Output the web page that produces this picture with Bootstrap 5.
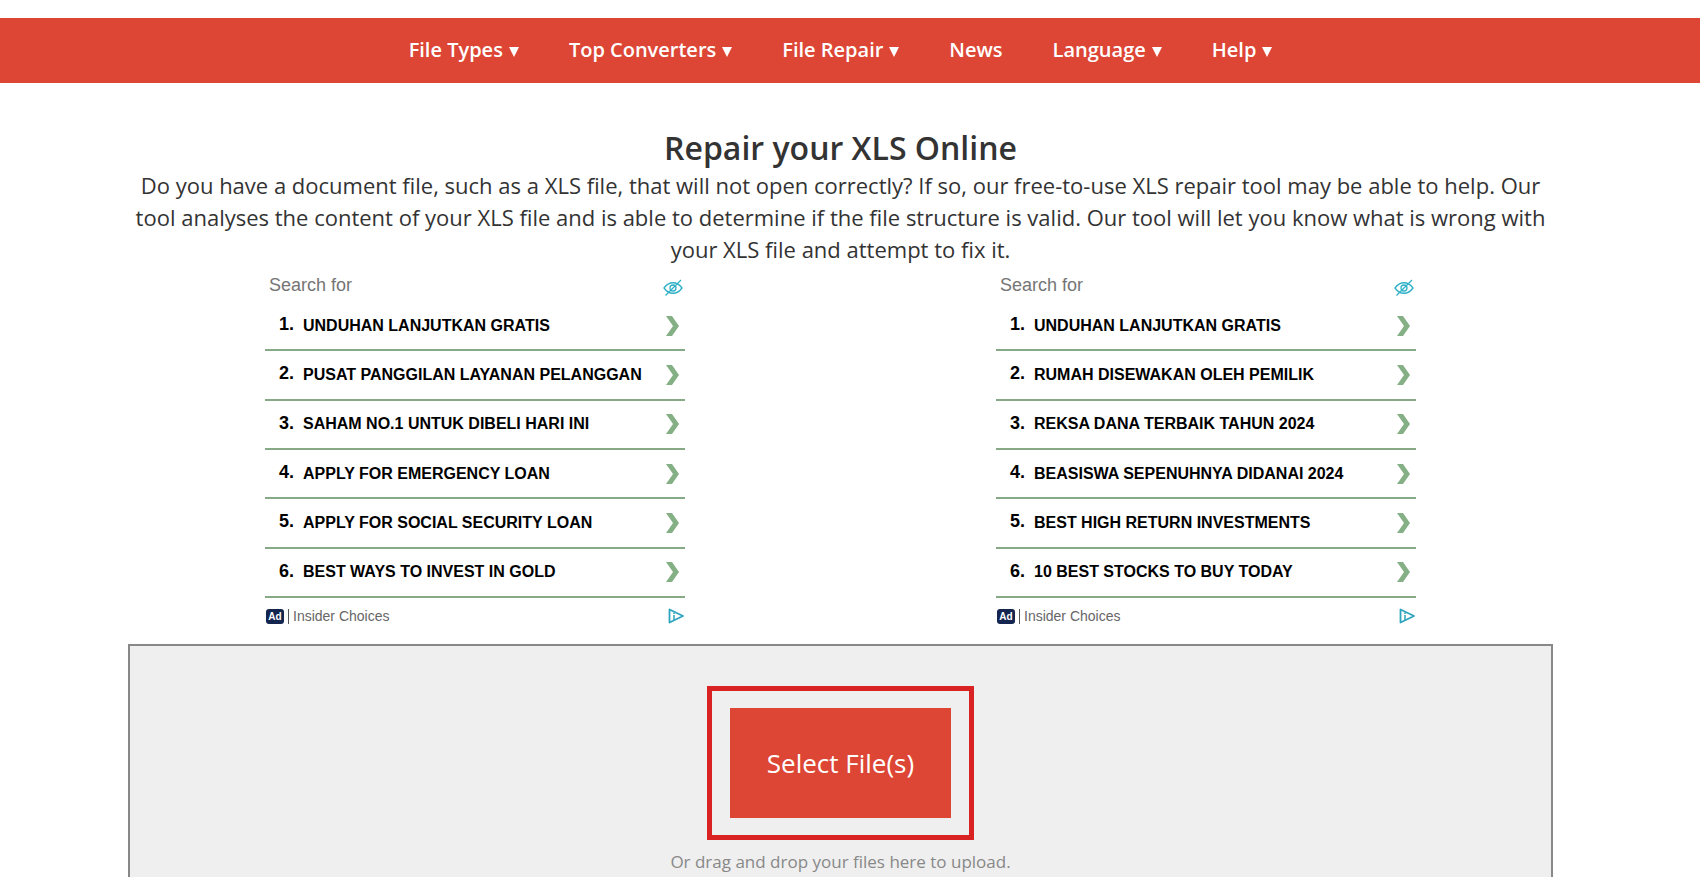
<!DOCTYPE html>
<html lang="en">
<head>
<meta charset="utf-8">
<meta name="viewport" content="width=device-width, initial-scale=1">
<title>Repair your XLS Online</title>
<link href="https://cdn.jsdelivr.net/npm/bootstrap@5.3.0/dist/css/bootstrap.min.css" rel="stylesheet">
<style>
  body { font-family: "Trebuchet MS", "Open Sans", sans-serif; color: #333; background: #fff; }
  .site-nav { background: #dd4535; margin-top: 18px; min-height: 65px; padding-bottom: 2px; }
  .site-nav, .page-main { padding-right: 19px; }
  .site-nav .nav { column-gap: 50px; }
  .site-nav .nav-link { color: #fff; font-size: 20px; line-height: 30px; font-weight: 600; gap: 6px; }
  .caret { width: 10px; height: 10px; fill: #fff; margin-top: 4px; }
  .page-col { max-width: 1425px; }
  h1 { font-size: 32px; line-height: 40px; font-weight: 600; margin-top: 45px; }
  .intro { font-size: 22px; line-height: 32px; padding-top: 1px; }
  .ads { padding: 6px 137px 20px; row-gap: 24px; }
  .ad-unit { width: 420px; font-family: "Liberation Sans", Arial, sans-serif; }
  .ad-head { color: #757575; font-size: 18px; line-height: 28px; padding: 0 2px 3px 4px; }
  .ad-head svg { margin-top: 6px; }
  .ad-list { min-height: 296px; }
  .ad-row { border-bottom: 2px solid #85aa85; color: #000; font-weight: 700; font-size: 16px; padding: 0 6px 0 14px; }
  .ad-num { width: 24px; font-size: 18px; padding-bottom: 2px; }
  .ad-foot { color: #666; font-size: 14px; line-height: 20px; padding: 10px 1px 0; }
  .ad-tag { background: #14254f; color: #fff; font-size: 10px; line-height: 15px; width: 18px; border-radius: 3px; }
  .ad-source { border-left: 1px solid #555; line-height: 15px; }
  .drop-zone { background: #efefef; border: 2px solid #888; border-bottom: 0; padding-top: 40px; min-height: 240px; color: #888; }
  .callout { border: 5px solid #d92323; padding: 17px 18px; }
  .btn-select { background: #dd4535; color: #fff; font-size: 26px; width: 221px; height: 110px; }
  .drop-hint { font-size: 17px; line-height: 24px; margin-top: 10px; }
  @media (max-width: 1300px) { .ads { padding-left: 0; padding-right: 0; } }
</style>
</head>
<body>
<svg class="d-none" aria-hidden="true">
  <symbol id="tri" viewBox="0 0 10 10"><path d="M0 0h10L5 10z"/></symbol>
  <symbol id="chev" viewBox="0 0 13 20"><path d="M0 0h6l7 10-7 10H0l7-10z" fill="#85b085"/></symbol>
  <symbol id="eye" viewBox="0 0 20 18"><g fill="none" stroke="#2fb0c7" stroke-width="1.300"><path d="M1 9c5-7 13-7 18 0c-5 7-13 7-18 0z"/><circle cx="10" cy="9" r="3"/><path d="M2.500 16.500L18 1"/></g></symbol>
  <symbol id="adchoice" viewBox="0 0 16 16"><path d="M1.500 1.500v13L15 8z" fill="none" stroke="#2fa5bd" stroke-width="1.800" stroke-linejoin="round"/><path d="M6 4.500v1.500M6 7v5" stroke="#2fa5bd" stroke-width="1.500"/></symbol>
</svg>

<header class="site-nav d-flex align-items-center justify-content-center">
  <nav aria-label="Main">
    <ul class="nav justify-content-center">
      <li class="nav-item"><a class="nav-link d-flex align-items-center p-0" href="#">File Types <svg class="caret"><use href="#tri"/></svg></a></li>
      <li class="nav-item"><a class="nav-link d-flex align-items-center p-0" href="#">Top Converters <svg class="caret"><use href="#tri"/></svg></a></li>
      <li class="nav-item"><a class="nav-link d-flex align-items-center p-0" href="#">File Repair <svg class="caret"><use href="#tri"/></svg></a></li>
      <li class="nav-item"><a class="nav-link d-flex align-items-center p-0" href="#">News</a></li>
      <li class="nav-item"><a class="nav-link d-flex align-items-center p-0" href="#">Language <svg class="caret"><use href="#tri"/></svg></a></li>
      <li class="nav-item"><a class="nav-link d-flex align-items-center p-0" href="#">Help <svg class="caret"><use href="#tri"/></svg></a></li>
    </ul>
  </nav>
</header>

<main class="page-main">
  <div class="page-col mx-auto">
    <h1 class="text-center mb-0">Repair your XLS Online</h1>
    <p class="intro text-center mb-0">Do you have a document file, such as a XLS file, that will not open correctly? If so, our free-to-use XLS repair tool may be able to help. Our<br class="d-none d-xxl-inline"> tool analyses the content of your XLS file and is able to determine if the file structure is valid. Our tool will let you know what is wrong with<br class="d-none d-xxl-inline"> your XLS file and attempt to fix it.</p>

    <div class="ads d-flex flex-wrap justify-content-between">
      <section class="ad-unit">
        <div class="ad-head d-flex justify-content-between align-items-center">Search for <svg width="20" height="18"><use href="#eye"/></svg></div>
        <div class="ad-list d-flex flex-column">
          <a href="#" class="ad-row d-flex flex-fill align-items-center text-decoration-none"><span class="ad-num">1.</span><span class="flex-grow-1">UNDUHAN LANJUTKAN GRATIS</span><svg width="13" height="20"><use href="#chev"/></svg></a>
          <a href="#" class="ad-row d-flex flex-fill align-items-center text-decoration-none"><span class="ad-num">2.</span><span class="flex-grow-1">PUSAT PANGGILAN LAYANAN PELANGGAN</span><svg width="13" height="20"><use href="#chev"/></svg></a>
          <a href="#" class="ad-row d-flex flex-fill align-items-center text-decoration-none"><span class="ad-num">3.</span><span class="flex-grow-1">SAHAM NO.1 UNTUK DIBELI HARI INI</span><svg width="13" height="20"><use href="#chev"/></svg></a>
          <a href="#" class="ad-row d-flex flex-fill align-items-center text-decoration-none"><span class="ad-num">4.</span><span class="flex-grow-1">APPLY FOR EMERGENCY LOAN</span><svg width="13" height="20"><use href="#chev"/></svg></a>
          <a href="#" class="ad-row d-flex flex-fill align-items-center text-decoration-none"><span class="ad-num">5.</span><span class="flex-grow-1">APPLY FOR SOCIAL SECURITY LOAN</span><svg width="13" height="20"><use href="#chev"/></svg></a>
          <a href="#" class="ad-row d-flex flex-fill align-items-center text-decoration-none"><span class="ad-num">6.</span><span class="flex-grow-1">BEST WAYS TO INVEST IN GOLD</span><svg width="13" height="20"><use href="#chev"/></svg></a>
        </div>
        <div class="ad-foot d-flex align-items-center"><span class="ad-tag fw-bold text-center">Ad</span><span class="ad-source ms-1 ps-1 flex-grow-1">Insider Choices</span><svg width="16" height="16"><use href="#adchoice"/></svg></div>
      </section>
      <section class="ad-unit">
        <div class="ad-head d-flex justify-content-between align-items-center">Search for <svg width="20" height="18"><use href="#eye"/></svg></div>
        <div class="ad-list d-flex flex-column">
          <a href="#" class="ad-row d-flex flex-fill align-items-center text-decoration-none"><span class="ad-num">1.</span><span class="flex-grow-1">UNDUHAN LANJUTKAN GRATIS</span><svg width="13" height="20"><use href="#chev"/></svg></a>
          <a href="#" class="ad-row d-flex flex-fill align-items-center text-decoration-none"><span class="ad-num">2.</span><span class="flex-grow-1">RUMAH DISEWAKAN OLEH PEMILIK</span><svg width="13" height="20"><use href="#chev"/></svg></a>
          <a href="#" class="ad-row d-flex flex-fill align-items-center text-decoration-none"><span class="ad-num">3.</span><span class="flex-grow-1">REKSA DANA TERBAIK TAHUN 2024</span><svg width="13" height="20"><use href="#chev"/></svg></a>
          <a href="#" class="ad-row d-flex flex-fill align-items-center text-decoration-none"><span class="ad-num">4.</span><span class="flex-grow-1">BEASISWA SEPENUHNYA DIDANAI 2024</span><svg width="13" height="20"><use href="#chev"/></svg></a>
          <a href="#" class="ad-row d-flex flex-fill align-items-center text-decoration-none"><span class="ad-num">5.</span><span class="flex-grow-1">BEST HIGH RETURN INVESTMENTS</span><svg width="13" height="20"><use href="#chev"/></svg></a>
          <a href="#" class="ad-row d-flex flex-fill align-items-center text-decoration-none"><span class="ad-num">6.</span><span class="flex-grow-1">10 BEST STOCKS TO BUY TODAY</span><svg width="13" height="20"><use href="#chev"/></svg></a>
        </div>
        <div class="ad-foot d-flex align-items-center"><span class="ad-tag fw-bold text-center">Ad</span><span class="ad-source ms-1 ps-1 flex-grow-1">Insider Choices</span><svg width="16" height="16"><use href="#adchoice"/></svg></div>
      </section>
    </div>

    <section class="drop-zone d-flex flex-column align-items-center">
      <div class="callout"><button type="button" class="btn btn-select rounded-0 border-0">Select File(s)</button></div>
      <p class="drop-hint mb-0">Or drag and drop your files here to upload.</p>
    </section>
  </div>
</main>
<script src="https://cdn.jsdelivr.net/npm/bootstrap@5.3.0/dist/js/bootstrap.bundle.min.js"></script>
</body>
</html>
